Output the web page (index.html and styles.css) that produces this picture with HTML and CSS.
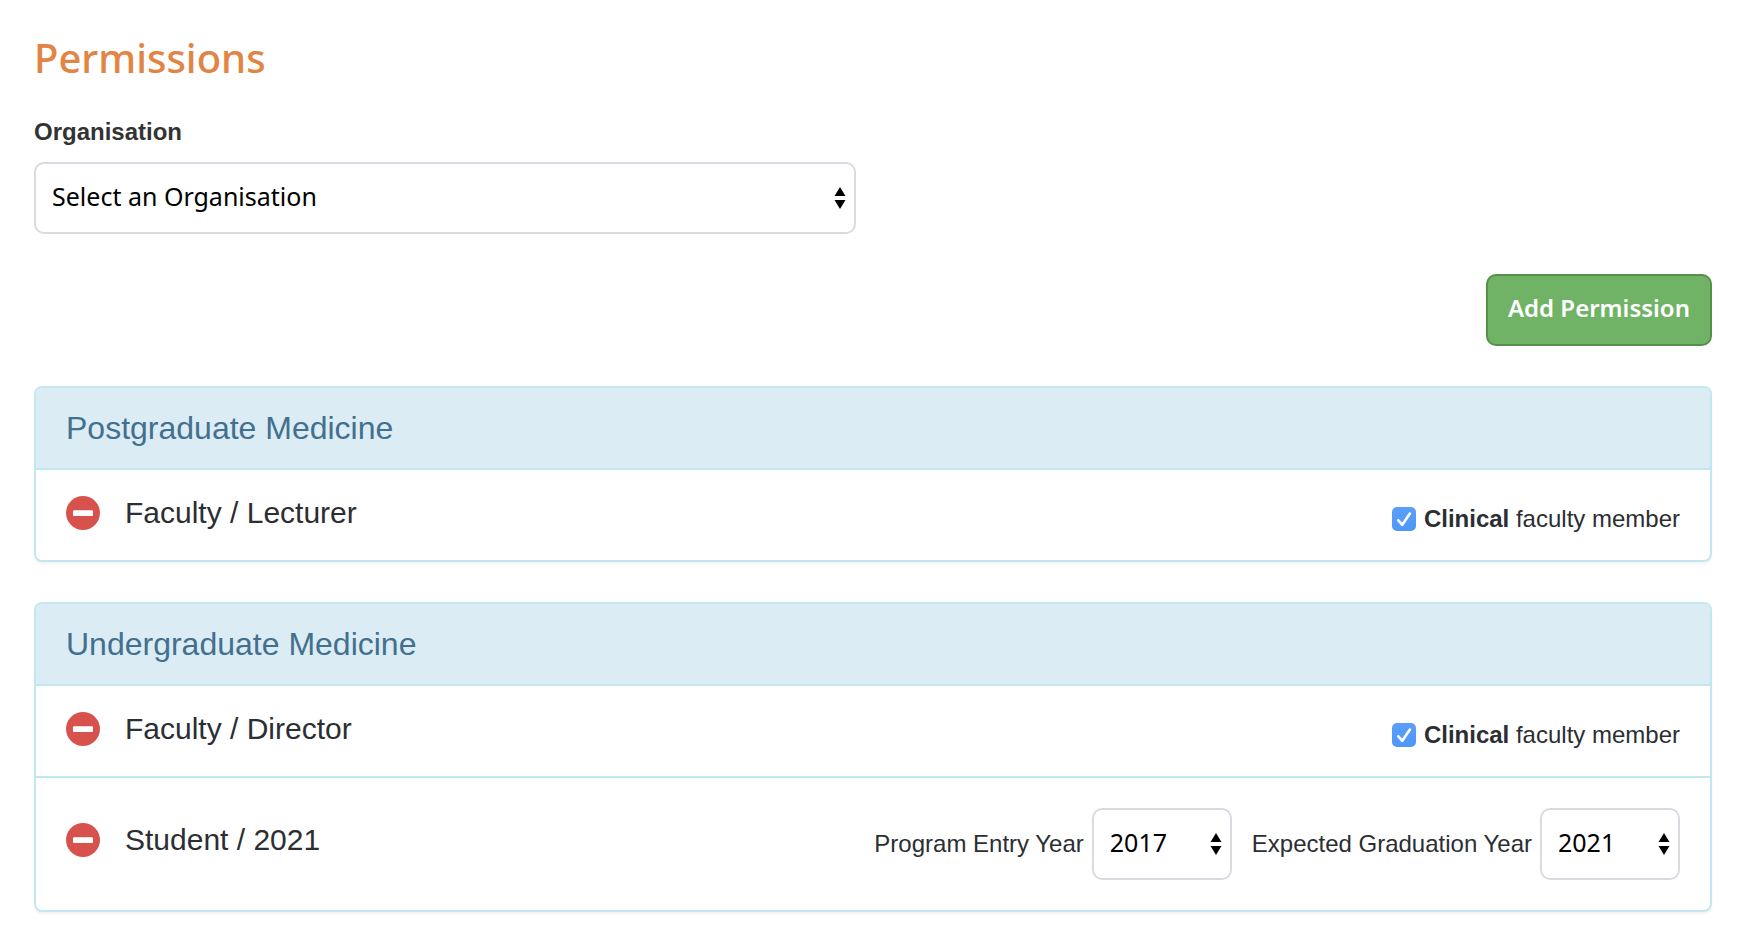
FILE: index.html
```html
<!DOCTYPE html>
<html lang="en">
<head>
<meta charset="utf-8">
<title>Permissions</title>
<link rel="stylesheet" href="styles.css">
</head>
<body>
<svg class="sprite" aria-hidden="true">
  <symbol id="remove" viewBox="0 0 34 34"><circle cx="17" cy="17" r="17" fill="#d7524d"/><rect x="7" y="14.300" width="20" height="5.800" rx="1.200" fill="#fff"/></symbol>
  <symbol id="arrows" viewBox="0 0 12 22"><path d="M6 0 11.500 9H.5ZM.5 13h11L6 22Z" fill="#000"/></symbol>
  <symbol id="tick" viewBox="0 0 24 24"><path d="M6.300 13.300 10.300 17.800 17.900 6.500" fill="none" stroke="#fff" stroke-width="2.600" stroke-linecap="round" stroke-linejoin="round"/></symbol>
</svg>
<main class="page">
  <h1 class="page-title">Permissions</h1>
  <label class="field-label" for="organisation">Organisation</label>
  <span class="select-box select-box-wide">
    <select id="organisation" class="select"><option>Select an Organisation</option></select>
    <svg class="select-arrows" aria-hidden="true"><use href="#arrows"/></svg>
  </span>
  <div class="actions"><button class="add-button" type="button">Add Permission</button></div>

  <section class="panel">
    <h2 class="panel-title">Postgraduate Medicine</h2>
    <div class="row">
      <div class="role"><button class="remove" type="button" aria-label="Remove Faculty / Lecturer"><svg class="remove-icon"><use href="#remove"/></svg></button><span>Faculty / Lecturer</span></div>
      <label class="clinical"><span class="check"><input class="check-input" type="checkbox" checked><svg class="check-tick" aria-hidden="true"><use href="#tick"/></svg></span><span><strong>Clinical</strong> faculty member</span></label>
    </div>
  </section>

  <section class="panel">
    <h2 class="panel-title">Undergraduate Medicine</h2>
    <div class="row">
      <div class="role"><button class="remove" type="button" aria-label="Remove Faculty / Director"><svg class="remove-icon"><use href="#remove"/></svg></button><span>Faculty / Director</span></div>
      <label class="clinical"><span class="check"><input class="check-input" type="checkbox" checked><svg class="check-tick" aria-hidden="true"><use href="#tick"/></svg></span><span><strong>Clinical</strong> faculty member</span></label>
    </div>
    <div class="row row-tall">
      <div class="role"><button class="remove" type="button" aria-label="Remove Student / 2021"><svg class="remove-icon"><use href="#remove"/></svg></button><span>Student / 2021</span></div>
      <div class="years">
        <div class="year"><label for="entry">Program Entry Year</label>
          <span class="select-box select-box-year"><select id="entry" class="select"><option>2017</option></select><svg class="select-arrows" aria-hidden="true"><use href="#arrows"/></svg></span></div>
        <div class="year"><label for="graduation">Expected Graduation Year</label>
          <span class="select-box select-box-year"><select id="graduation" class="select"><option>2021</option></select><svg class="select-arrows" aria-hidden="true"><use href="#arrows"/></svg></span></div>
      </div>
    </div>
  </section>
</main>
</body>
</html>
```
FILE: styles.css
```css
* { box-sizing: border-box; }
body {
  margin: 0;
  background: #fff;
  color: #2b2e33;
  font: 24px/40px "Liberation Sans", Arial, sans-serif;
}
.sprite { position: absolute; width: 0; height: 0; }
.page { padding: 28px 28px 34px 34px; }
.page-title {
  margin: 0 0 24px;
  color: #e28443;
  font: 500 40px/60px "Noto Sans", sans-serif;
}
.field-label { display: block; margin-bottom: 10px; color: #333; font-weight: 700; }
.select-box { position: relative; display: block; }
.select-box-wide { width: 49%; }
.select-box-year { width: 140px; }
.select {
  appearance: none;
  display: block;
  width: 100%;
  height: 72px;
  padding: 0 16px 4px;
  border: 2px solid #d8dce2;
  border-radius: 10px;
  background: #fff;
  color: #000;
  font: 400 25px/40px "Noto Sans", sans-serif;
}
.select-arrows {
  position: absolute;
  top: 25px;
  right: 10px;
  width: 12px;
  height: 22px;
  pointer-events: none;
}
.actions { display: flex; justify-content: flex-end; margin: 40px 0; }
.add-button {
  height: 72px;
  padding: 0 20px 4px;
  border: 2px solid #559048;
  border-radius: 10px;
  background: #71b366;
  color: #fff;
  font: 600 24px/40px "Noto Sans", sans-serif;
}
.panel {
  margin-bottom: 40px;
  overflow: hidden;
  border: 2px solid #c3e7ef;
  border-radius: 8px;
  box-shadow: 0 2px 2px rgba(0, 0, 0, .05);
}
.panel:last-child { margin-bottom: 0; }
.panel-title {
  margin: 0;
  padding: 20px 30px;
  background: #dcecf5;
  color: #42708e;
  font-size: 32px;
  font-weight: 400;
  line-height: 40px;
}
.row {
  display: flex;
  align-items: center;
  justify-content: space-between;
  min-height: 92px;
  padding: 0 30px;
  border-top: 2px solid #c3e7ef;
}
.row-tall { padding: 30px; }
.role {
  display: flex;
  align-items: center;
  gap: 25px;
  padding-bottom: 4px;
  font-size: 30px;
}
.row-tall .role { padding-bottom: 8px; }
.remove { display: block; width: 34px; height: 34px; padding: 0; border: 0; background: none; }
.remove-icon { display: block; width: 34px; height: 34px; }
.clinical { display: flex; align-items: center; gap: 8px; padding-top: 8px; }
.check { position: relative; width: 24px; height: 24px; }
.check-input {
  appearance: none;
  display: block;
  width: 24px;
  height: 24px;
  margin: 0;
  border-radius: 5px;
  background: linear-gradient(#5a9ff8, #4f97f7);
}
.check-tick { position: absolute; top: 0; left: 0; width: 24px; height: 24px; pointer-events: none; }
.years { display: flex; gap: 20px; }
.year { display: flex; align-items: center; gap: 8px; }
```
